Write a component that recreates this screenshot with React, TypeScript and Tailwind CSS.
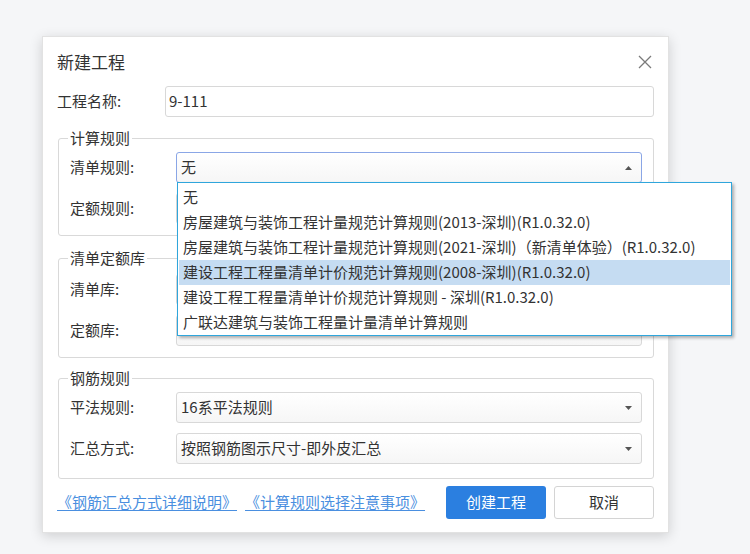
import { type ReactNode } from 'react';

function Caret({ up }: { up?: boolean }) {
  return (
    <svg width="7" height="4" viewBox="0 0 7 4" className="shrink-0">
      <path d={up ? 'M0 4 L3.5 0 L7 4 Z' : 'M0 0 L3.5 4 L7 0 Z'} fill="#555" />
    </svg>
  );
}

function Select({ value, focused, up }: { value?: string; focused?: boolean; up?: boolean }) {
  return (
    <div
      className={`flex h-[31px] flex-1 items-center justify-between rounded-[3px] border bg-gradient-to-b from-white to-[#f6f6f6] pl-[4px] pr-[9px] ${
        focused ? 'border-[#8aa6e6]' : 'border-[#d8d8d8]'
      }`}
    >
      <span className="text-[#333]">{value}</span>
      <Caret up={up} />
    </div>
  );
}

function Row({ label, children }: { label: string; children: ReactNode }) {
  return (
    <div className="flex items-center">
      <span className="w-[106px] shrink-0 text-[#333]">{label}</span>
      {children}
    </div>
  );
}

function Group({ title, children, className }: { title: string; children: ReactNode; className?: string }) {
  return (
    <div className={`relative ml-[15px] mr-[14px] flex flex-col gap-[10px] rounded-[3px] border border-[#d9d9d9] pl-[11px] pr-[11px] ${className ?? ''}`}>
      {/* 分组标题压在边框上 */}
      <span className="absolute -top-[12px] left-[9px] bg-white px-[2px] leading-[22px] text-[#333]">{title}</span>
      {children}
    </div>
  );
}

const opcoes = [
  '无',
  '房屋建筑与装饰工程计量规范计算规则(2013-深圳)(R1.0.32.0)',
  '房屋建筑与装饰工程计量规范计算规则(2021-深圳)（新清单体验）(R1.0.32.0)',
  '建设工程工程量清单计价规范计算规则(2008-深圳)(R1.0.32.0)',
  '建设工程工程量清单计价规范计算规则 - 深圳(R1.0.32.0)',
  '广联达建筑与装饰工程量计量清单计算规则',
];

export default function App() {
  return (
    <div className="h-[554px] w-[750px] overflow-hidden bg-[#f5f6f8] pt-[36px] font-['Noto_Sans_CJK_SC','Noto_Sans',sans-serif] text-[15px]">
      <div className="relative ml-[42px] flex h-[497px] w-[627px] flex-col border border-[#e2e2e2] bg-white shadow-[0_3px_12px_rgba(0,0,0,0.16)]">
        {/* 标题栏 */}
        <div className="flex h-[49px] shrink-0 items-center justify-between pl-[14px] pr-[16px]">
          <span className="text-[17px] text-[#333]">新建工程</span>
          <svg width="14" height="14" viewBox="0 0 14 14">
            <path d="M1 1 L13 13 M13 1 L1 13" stroke="#7a7a7a" strokeWidth="1.3" />
          </svg>
        </div>

        <div className="flex items-center pl-[14px] pr-[14px]">
          <span className="w-[108px] shrink-0 text-[#333]">工程名称:</span>
          <div className="flex h-[31px] flex-1 items-center rounded-[3px] border border-[#d8d8d8] pl-[3px] text-[#333]">9-111</div>
        </div>

        <Group title="计算规则" className="mt-[21px] pt-[13px] pb-[11px]">
          <Row label="清单规则:">
            <Select value="无" focused up />
          </Row>
          <Row label="定额规则:">
            <Select />
          </Row>
        </Group>

        <Group title="清单定额库" className="mt-[22px] pt-[15px] pb-[11px]">
          <Row label="清单库:">
            <Select />
          </Row>
          <Row label="定额库:">
            <Select />
          </Row>
        </Group>

        <Group title="钢筋规则" className="mt-[20px] pt-[13px] pb-[14px]">
          <Row label="平法规则:">
            <Select value="16系平法规则" />
          </Row>
          <Row label="汇总方式:">
            <Select value="按照钢筋图示尺寸-即外皮汇总" />
          </Row>
        </Group>

        {/* 底部链接与按钮 */}
        <div className="mt-[7px] flex items-center pl-[14px] pr-[14px]">
          <a className="text-[#4a8fe0] underline underline-offset-2">《钢筋汇总方式详细说明》</a>
          <a className="ml-[8px] text-[#4a8fe0] underline underline-offset-2">《计算规则选择注意事项》</a>
          <button className="ml-auto flex h-[33px] w-[100px] items-center justify-center rounded-[3px] bg-[#2b7fe0] text-white">
            创建工程
          </button>
          <button className="ml-[8px] flex h-[33px] w-[100px] items-center justify-center rounded-[3px] border border-[#d4d4d4] bg-white text-[#333]">
            取消
          </button>
        </div>

        {/* 清单规则下拉列表 */}
        <div className="absolute left-[134px] top-[145px] z-10 h-[154px] w-[555px] border border-[#2fa6dc] bg-white pt-[2px] shadow-[2px_2px_3px_rgba(0,0,0,0.3)]">
          {opcoes.map((texto, idx) => (
            <div
              key={idx}
              className={`mx-[1px] flex h-[25px] items-center whitespace-nowrap pl-[4px] text-[#333] ${idx === 3 ? 'bg-[#c5dcf2]' : ''}`}
            >
              {texto}
            </div>
          ))}
        </div>
      </div>
    </div>
  );
}
